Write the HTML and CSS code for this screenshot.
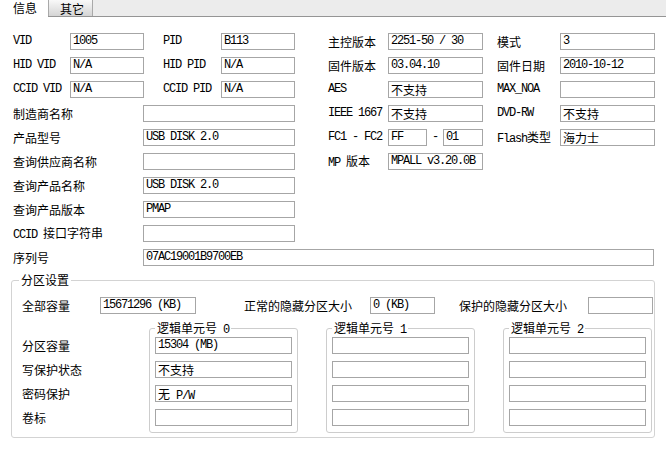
FILE: index.html
```html
<!DOCTYPE html>
<html lang="zh-CN">
<head>
<meta charset="utf-8">
<title>信息</title>
<link rel="stylesheet" href="styles.css">
</head>
<body>
<div class="tabs">
  <div class="tab tab-active">信息</div>
  <div class="tab tab-other">其它</div>
</div>

<div class="info">
  <div class="row">
    <span class="lbl lbl-a en">VID</span><span class="box box-s en">1005</span>
    <span class="lbl lbl-b en">PID</span><span class="box box-s en">B113</span>
    <span class="lbl lbl-c">主控版本</span><span class="box box-m en">2251-50 / 30</span>
    <span class="lbl lbl-d">模式</span><span class="box box-m en">3</span>
  </div>
  <div class="row">
    <span class="lbl lbl-a en">HID VID</span><span class="box box-s en">N/A</span>
    <span class="lbl lbl-b en">HID PID</span><span class="box box-s en">N/A</span>
    <span class="lbl lbl-c">固件版本</span><span class="box box-m en">03.04.10</span>
    <span class="lbl lbl-d">固件日期</span><span class="box box-m en">2010-10-12</span>
  </div>
  <div class="row">
    <span class="lbl lbl-a en">CCID VID</span><span class="box box-s en">N/A</span>
    <span class="lbl lbl-b en">CCID PID</span><span class="box box-s en">N/A</span>
    <span class="lbl lbl-c en">AES</span><span class="box box-m">不支持</span>
    <span class="lbl lbl-d en">MAX_NOA</span><span class="box box-m"></span>
  </div>
  <div class="row">
    <span class="lbl lbl-wide">制造商名称</span><span class="box box-l"></span>
    <span class="lbl lbl-c en">IEEE 1667</span><span class="box box-m">不支持</span>
    <span class="lbl lbl-d en">DVD-RW</span><span class="box box-m">不支持</span>
  </div>
  <div class="row">
    <span class="lbl lbl-wide">产品型号</span><span class="box box-l en">USB DISK 2.0</span>
    <span class="lbl lbl-c en">FC1 - FC2</span><span class="box box-fc1 en">FF</span><span class="dash en">-</span><span class="box box-fc2 en">01</span>
    <span class="lbl lbl-d"><span class="en">Flash</span>类型</span><span class="box box-m">海力士</span>
  </div>
  <div class="row">
    <span class="lbl lbl-wide">查询供应商名称</span><span class="box box-l"></span>
    <span class="lbl lbl-c"><span class="en">MP </span>版本</span><span class="box box-m en">MPALL v3.20.0B</span>
  </div>
  <div class="row">
    <span class="lbl lbl-wide">查询产品名称</span><span class="box box-l en">USB DISK 2.0</span>
  </div>
  <div class="row">
    <span class="lbl lbl-wide">查询产品版本</span><span class="box box-l en">PMAP</span>
  </div>
  <div class="row">
    <span class="lbl lbl-wide"><span class="en">CCID </span>接口字符串</span><span class="box box-l"></span>
  </div>
  <div class="row">
    <span class="lbl lbl-wide">序列号</span><span class="box box-xl en">07AC19001B9700EB</span>
  </div>
</div>

<fieldset class="group">
  <legend>分区设置</legend>
  <div class="prow">
    <span class="lbl plbl-a">全部容量</span><span class="box box-total en">15671296 (KB)</span>
    <span class="lbl plbl-b">正常的隐藏分区大小</span><span class="box box-hid en">0 (KB)</span>
    <span class="lbl plbl-c">保护的隐藏分区大小</span><span class="box box-hid"></span>
  </div>
  <div class="units">
    <div class="unit-labels">
      <span class="ulbl">分区容量</span>
      <span class="ulbl">写保护状态</span>
      <span class="ulbl">密码保护</span>
      <span class="ulbl">卷标</span>
    </div>
    <fieldset class="unit">
      <legend>逻辑单元号<span class="en"> 0</span></legend>
      <span class="box box-unit en">15304 (MB)</span>
      <span class="box box-unit">不支持</span>
      <span class="box box-unit">无<span class="en"> P/W</span></span>
      <span class="box box-unit"></span>
    </fieldset>
    <fieldset class="unit">
      <legend>逻辑单元号<span class="en"> 1</span></legend>
      <span class="box box-unit"></span>
      <span class="box box-unit"></span>
      <span class="box box-unit"></span>
      <span class="box box-unit"></span>
    </fieldset>
    <fieldset class="unit">
      <legend>逻辑单元号<span class="en"> 2</span></legend>
      <span class="box box-unit"></span>
      <span class="box box-unit"></span>
      <span class="box box-unit"></span>
      <span class="box box-unit"></span>
    </fieldset>
  </div>
</fieldset>
</body>
</html>
```

FILE: styles.css
```css
* { box-sizing: border-box; }
html, body { margin: 0; padding: 0; }
body {
  width: 666px;
  height: 451px;
  overflow: hidden;
  background: #fff;
  color: #000;
  font: 12px/17px "Noto Sans CJK SC", "Noto Sans CJK JP", sans-serif;
}
.en {
  font-family: "Liberation Mono", "Noto Sans CJK SC", monospace;
  letter-spacing: -1.2px;
}

/* tab strip */
.tabs {
  display: flex;
  height: 17px;
  background: #ececec;
  border-bottom: 1px solid #959595;
}
.tab { line-height: 16px; white-space: nowrap; }
.tab-active {
  width: 48px;
  height: 17px;
  background: #fff;
  padding-left: 13px;
}
.tab-other {
  width: 45px;
  height: 16px;
  padding: 1px 0 0 11px;
  border-left: 1px solid #a9a9a9;
  border-right: 1px solid #a9a9a9;
  background: linear-gradient(#f9f9f9, #d4d4d4);
}

/* info grid rows */
.info { padding: 16px 0 0 13px; }
.row {
  display: flex;
  align-items: center;
  height: 17px;
  margin-bottom: 7px;
}
.lbl { flex: none; white-space: pre; }
.lbl-a { width: 57px; }
.lbl-b { width: 77px; padding-left: 19px; }
.lbl-c { width: 93px; padding-left: 33px; }
.lbl-d { width: 77px; padding-left: 14px; }
.lbl-wide { width: 130px; }

.box {
  display: block;
  flex: none;
  height: 17px;
  border: 1px solid #a6a6a6;
  padding-left: 2px;
  line-height: 15px;
  white-space: pre;
  overflow: hidden;
  background: #fff;
}
.box-s { width: 74px; }
.box-m { width: 95px; }
.box-l { width: 152px; }
.box-xl { width: 511px; }
.box-fc1 { width: 39px; }
.box-fc2 { width: 40px; }
.dash { flex: none; width: 16px; text-align: center; }

/* partition group */
.group {
  margin: 5px 0 0 11px;
  width: 644px;
  min-inline-size: 0;
  padding: 10px 0 4px 10px;
  border: 1px solid #d3d3d3;
  border-radius: 3px;
}
.group > legend {
  margin-left: -3px;
  padding: 0 2px;
  height: 14px;
  line-height: 14px;
}
.prow {
  display: flex;
  align-items: center;
  height: 17px;
}
.plbl-a { width: 78px; }
.plbl-b { width: 174px; padding-left: 48px; }
.plbl-c { width: 153px; padding-left: 24px; }
.box-total { width: 96px; }
.box-hid { width: 65px; }

.units {
  display: flex;
  align-items: flex-start;
  margin-top: 7px;
}
.unit-labels {
  flex: none;
  width: 127px;
  padding-top: 16px;
  display: flex;
  flex-direction: column;
  gap: 7px;
}
.ulbl { height: 17px; line-height: 17px; }
.unit {
  flex: none;
  width: 149px;
  min-inline-size: 0;
  margin: 0;
  padding: 2px 4px 6px 5px;
  border: 1px solid #cdcdcd;
  border-radius: 3px;
  display: flex;
  flex-direction: column;
  gap: 7px;
}
.unit + .unit { margin-left: 28px; }
.unit > legend {
  padding: 0 2px;
  height: 14px;
  line-height: 14px;
}
.box-unit { width: 137px; }
```
